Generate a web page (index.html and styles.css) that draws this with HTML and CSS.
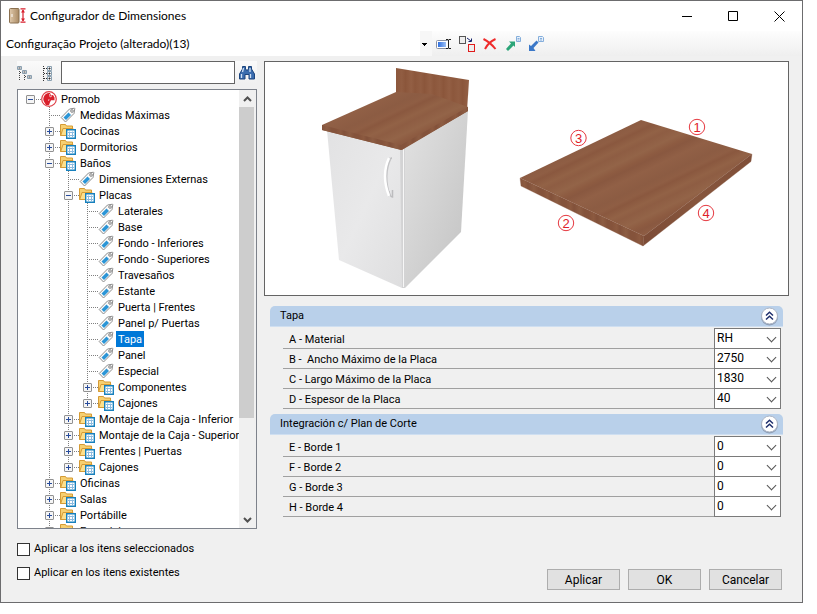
FILE: index.html
```html
<!DOCTYPE html>
<html lang="es">
<head>
<meta charset="utf-8">
<title>Configurador de Dimensiones</title>
<link rel="stylesheet" href="styles.css">
</head>
<body>
<svg class="defs" aria-hidden="true">
  <symbol id="tag" viewBox="0 0 16 16">
    <path d="M1.200 10.500 9.500 2l5-.8.300.300L14 6.500 5.500 15z" fill="#fafafa" stroke="#8d8d8d"/>
    <path d="M3.500 10.500 8.500 5.500 11 8 6 13z" fill="#2b95d6"/>
    <circle cx="12" cy="4" r="1.300" fill="#fff" stroke="#666" stroke-width=".8"/>
  </symbol>
  <symbol id="folder" viewBox="0 0 16 16">
    <path d="M.5 12.500v-11h5l1 1.500h6v9z" fill="#f7d071" stroke="#d59b35"/>
    <path d="M.7 12.500 3 5.500h10v7z" fill="#fde08d" stroke="#d59b35"/>
    <path d="M6.700 6.700h8.600v8.600H6.700z" fill="#fff" stroke="#1780bd" stroke-width="1.400"/>
    <path d="M8 9.500h6M8 12.500h6M9.500 8.500v5.500M12.500 8.500v5.500" stroke="#8dbbe0"/>
  </symbol>
  <symbol id="logo" viewBox="0 0 16 16">
    <circle cx="8" cy="8" r="7.300" fill="#fff" stroke="#df4048" stroke-width="1.200"/>
    <path d="M8 2a6 6 0 0 0-4.500 9.500L5 14l3 .2 1-3 1-2h3.500V6.500L12 4 10 4.500 9 2z" fill="#d91f2b"/>
    <path d="m8.500 3 .5 3 2-1M8 8l-.5 2" stroke="#fff" stroke-width=".6" fill="none"/>
  </symbol>
  <symbol id="chev" viewBox="0 0 19 19">
    <circle cx="9.500" cy="10" r="8.500" fill="#8d9db5"/>
    <circle cx="9.500" cy="9" r="8" fill="#fff" stroke="#aab4c4"/>
    <path d="m6 8.500 3.500-3.300L13 8.500M6 12.500l3.500-3.300 3.500 3.300" fill="none" stroke="#1f2f6d" stroke-width="1.500"/>
  </symbol>
</svg>

<div class="window">
  <header class="titlebar">
    <svg class="app-icon" viewBox="0 0 17 16">
      <defs><linearGradient id="door"><stop offset="0" stop-color="#e0c9ab"/><stop offset="1" stop-color="#a98a64"/></linearGradient></defs>
      <rect x=".5" y=".5" width="9.500" height="14.500" rx="1" fill="url(#door)" stroke="#8a7050"/>
      <path d="M3 6v3" stroke="#fff"/>
      <path d="M11.500.800h5M11.500 14.200h5M14 2v11" stroke="#d81e2c" stroke-width="1.200"/>
      <path d="m12 4.500 2-3 2 3zM12 10.500l2 3 2-3z" fill="#d81e2c"/>
    </svg>
    <h1>Configurador de Dimensiones</h1>
    <div class="window-buttons">
      <button aria-label="Minimizar"><svg viewBox="0 0 11 11"><path d="M0 5.500h10"/></svg></button>
      <button aria-label="Maximizar"><svg viewBox="0 0 11 11"><path d="M.5 .5h9v9h-9z"/></svg></button>
      <button aria-label="Cerrar"><svg viewBox="0 0 11 11"><path d="m.5.500 10 10M10.500.500l-10 10"/></svg></button>
    </div>
  </header>

  <div class="toolbar">
    <select class="project" aria-label="Configuración"><option>Configuração Projeto (alterado)(13)</option></select>
    <button class="tool" aria-label="Renombrar"><svg viewBox="0 0 16 16">
      <defs><linearGradient id="bar"><stop offset="0" stop-color="#2f6fe0"/><stop offset="1" stop-color="#9cc0f5"/></linearGradient></defs>
      <rect x=".5" y="4.500" width="12" height="8" rx="1" fill="#fff" stroke="#8991a3"/><rect x="2" y="6" width="8" height="5" fill="url(#bar)"/>
      <path d="M10 3.500h2l.5 1 .5-1h2M12.500 4v8M10 12.500h2l.5-1 .5 1h2" stroke="#222" fill="none"/></svg></button>
    <button class="tool" aria-label="Duplicar"><svg viewBox="0 0 16 16">
      <rect x=".5" y=".5" width="6" height="7" fill="#eee" stroke="#555"/><rect x="9.500" y="8.500" width="6" height="7" fill="#eee" stroke="#e01b1b"/>
      <path d="m8 2 4 3M12.500 2.500v3h-3" stroke="#17246e" fill="none"/></svg></button>
    <button class="tool" aria-label="Eliminar"><svg viewBox="0 0 16 16">
      <path d="M1.500 3c4 2 8 5 12 10M13.500 3C9 5 5 9 3 13" stroke="#ef2b2b" stroke-width="2" fill="none"/></svg></button>
    <button class="tool" aria-label="Exportar"><svg viewBox="0 0 16 16">
      <path d="M11.500.500h3l1 1v4h-4z" fill="#e8f1fc" stroke="#85aedb"/><path d="M12.500 2.500h2M12.500 4h2" stroke="#85aedb"/>
      <path d="m1 13 2 2 5.500-5.500L10 11V5.500H4L6 7.500z" fill="#2ba578"/></svg></button>
    <button class="tool" aria-label="Importar"><svg viewBox="0 0 16 16">
      <path d="M10.500.500h4l1 1v4h-5z" fill="#e8f1fc" stroke="#85aedb"/><path d="M12 2.500h2M12 4h2" stroke="#85aedb"/>
      <path d="M10.500 6.500 8.500 4.500 3 10 1 8.500V15h6.500L5.500 12z" fill="#3b78c8"/></svg></button>
  </div>

  <main class="content">
    <section class="sidebar">
      <div class="search">
        <button class="find" aria-label="Contraer todo"><svg viewBox="0 0 16 16">
          <path d="M2.500 4v12M3 7.500h2M7.500 10v6M8 11.500h3" stroke="#444" stroke-dasharray="1 1"/>
          <path d="M.5 1.500h4v3h-4zM5.500 5.500h4v3h-4zM10.500 10.500h4v3h-4z" fill="#f2f4f7" stroke="#8aa0b0"/>
          <path d="M1.500 3h2M6.500 7h2M11.500 12h2" stroke="#333"/></svg></button>
        <button class="find" aria-label="Expandir todo"><svg viewBox="0 0 16 16">
          <path d="M4.500 1v15M5 3.500h3M5 8.500h3M5 13.500h3" stroke="#333" stroke-dasharray="1 1"/>
          <path d="M8.500 1.500h4v4h-4zM8.500 6.500h4v4h-4zM8.500 11.500h4v4h-4z" fill="#f2f4f7" stroke="#8aa0b0"/>
          <path d="M9.500 3.500h2M10.500 2.500v2M9.500 8.500h2M10.500 7.500v2M9.500 13.500h2M10.500 12.500v2" stroke="#333"/></svg></button>
        <input type="text" aria-label="Buscar">
        <button class="find" aria-label="Buscar"><svg viewBox="0 0 16 16">
          <path d="M3.500 1.500h3V4l.5 1h2l.5-1V1.500h3V4l3 5v5h-5.500V9.500h-4V14H.5V9l3-5z" fill="#3a6cae" stroke="#1c457e"/>
          <path d="M4.500 3 3.500 7M2.500 9v4M11 3v4M11.500 9v4" stroke="#cfe0f5" stroke-width="1.300"/></svg></button>
      </div>

      <div class="tree">
        <div class="tree-view">
          <ul>
            <li><div class="node"><span class="joint"><button class="toggle open" aria-label="Contraer"></button></span><svg><use href="#logo"/></svg><span class="label">Promob</span></div>
              <ul>
                <li><div class="node"><span class="joint"></span><svg><use href="#tag"/></svg><span class="label">Medidas Máximas</span></div></li>
                <li><div class="node"><span class="joint"><button class="toggle" aria-label="Expandir"></button></span><svg><use href="#folder"/></svg><span class="label">Cocinas</span></div></li>
                <li><div class="node"><span class="joint"><button class="toggle" aria-label="Expandir"></button></span><svg><use href="#folder"/></svg><span class="label">Dormitorios</span></div></li>
                <li><div class="node"><span class="joint"><button class="toggle open" aria-label="Contraer"></button></span><svg><use href="#folder"/></svg><span class="label">Baños</span></div>
                  <ul>
                    <li><div class="node"><span class="joint"></span><svg><use href="#tag"/></svg><span class="label">Dimensiones Externas</span></div></li>
                    <li><div class="node"><span class="joint"><button class="toggle open" aria-label="Contraer"></button></span><svg><use href="#folder"/></svg><span class="label">Placas</span></div>
                      <ul>
                        <li><div class="node"><span class="joint"></span><svg><use href="#tag"/></svg><span class="label">Laterales</span></div></li>
                        <li><div class="node"><span class="joint"></span><svg><use href="#tag"/></svg><span class="label">Base</span></div></li>
                        <li><div class="node"><span class="joint"></span><svg><use href="#tag"/></svg><span class="label">Fondo - Inferiores</span></div></li>
                        <li><div class="node"><span class="joint"></span><svg><use href="#tag"/></svg><span class="label">Fondo - Superiores</span></div></li>
                        <li><div class="node"><span class="joint"></span><svg><use href="#tag"/></svg><span class="label">Travesaños</span></div></li>
                        <li><div class="node"><span class="joint"></span><svg><use href="#tag"/></svg><span class="label">Estante</span></div></li>
                        <li><div class="node"><span class="joint"></span><svg><use href="#tag"/></svg><span class="label">Puerta | Frentes</span></div></li>
                        <li><div class="node"><span class="joint"></span><svg><use href="#tag"/></svg><span class="label">Panel p/ Puertas</span></div></li>
                        <li><div class="node"><span class="joint"></span><svg><use href="#tag"/></svg><span class="label selected">Tapa</span></div></li>
                        <li><div class="node"><span class="joint"></span><svg><use href="#tag"/></svg><span class="label">Panel</span></div></li>
                        <li><div class="node"><span class="joint"></span><svg><use href="#tag"/></svg><span class="label">Especial</span></div></li>
                        <li><div class="node"><span class="joint"><button class="toggle" aria-label="Expandir"></button></span><svg><use href="#folder"/></svg><span class="label">Componentes</span></div></li>
                        <li><div class="node"><span class="joint"><button class="toggle" aria-label="Expandir"></button></span><svg><use href="#folder"/></svg><span class="label">Cajones</span></div></li>
                      </ul>
                    </li>
                    <li><div class="node"><span class="joint"><button class="toggle" aria-label="Expandir"></button></span><svg><use href="#folder"/></svg><span class="label">Montaje de la Caja - Inferior</span></div></li>
                    <li><div class="node"><span class="joint"><button class="toggle" aria-label="Expandir"></button></span><svg><use href="#folder"/></svg><span class="label">Montaje de la Caja - Superior</span></div></li>
                    <li><div class="node"><span class="joint"><button class="toggle" aria-label="Expandir"></button></span><svg><use href="#folder"/></svg><span class="label">Frentes | Puertas</span></div></li>
                    <li><div class="node"><span class="joint"><button class="toggle" aria-label="Expandir"></button></span><svg><use href="#folder"/></svg><span class="label">Cajones</span></div></li>
                  </ul>
                </li>
                <li><div class="node"><span class="joint"><button class="toggle" aria-label="Expandir"></button></span><svg><use href="#folder"/></svg><span class="label">Oficinas</span></div></li>
                <li><div class="node"><span class="joint"><button class="toggle" aria-label="Expandir"></button></span><svg><use href="#folder"/></svg><span class="label">Salas</span></div></li>
                <li><div class="node"><span class="joint"><button class="toggle" aria-label="Expandir"></button></span><svg><use href="#folder"/></svg><span class="label">Portábille</span></div></li>
                <li><div class="node"><span class="joint"><button class="toggle" aria-label="Expandir"></button></span><svg><use href="#folder"/></svg><span class="label">Exposiciones</span></div></li>
              </ul>
            </li>
          </ul>
        </div>
        <div class="scrollbar">
          <button aria-label="Subir"><svg viewBox="0 0 9 6"><path d="m1 5 3.500-3.500L8 5"/></svg></button>
          <div class="track"><div class="thumb"></div></div>
          <button aria-label="Bajar"><svg viewBox="0 0 9 6"><path d="m1 1 3.500 3.500L8 1"/></svg></button>
        </div>
      </div>
    </section>

    <section class="details">
      <div class="preview">
        <svg viewBox="265 62 523 233" role="img" aria-label="Mueble y tapa con bordes numerados">
          <defs>
            <linearGradient id="grain" gradientUnits="userSpaceOnUse" x1="580" y1="149" x2="606" y2="203" spreadMethod="repeat">
              <stop offset="0" stop-color="#8c5c43"/><stop offset=".1" stop-color="#8f5e44"/><stop offset=".16" stop-color="#8a583f"/>
              <stop offset=".28" stop-color="#926246"/><stop offset=".36" stop-color="#8e5d43"/><stop offset=".5" stop-color="#936448"/>
              <stop offset=".6" stop-color="#8d5b41"/><stop offset=".66" stop-color="#895840"/><stop offset=".8" stop-color="#916046"/><stop offset="1" stop-color="#8c5c43"/>
            </linearGradient>
            <linearGradient id="edge" gradientUnits="userSpaceOnUse" x1="520" y1="0" x2="543" y2="0" spreadMethod="repeat">
              <stop offset="0" stop-color="#85533b"/><stop offset=".2" stop-color="#8c5a40"/><stop offset=".35" stop-color="#82513a"/>
              <stop offset=".6" stop-color="#8d5d43"/><stop offset=".8" stop-color="#84533b"/><stop offset="1" stop-color="#85533b"/>
            </linearGradient>
            <linearGradient id="right-edge" x1="0" y1="1" x2="1" y2="0">
              <stop offset="0" stop-color="#7c4b36"/><stop offset=".5" stop-color="#87563d"/><stop offset="1" stop-color="#7f4e38"/>
            </linearGradient>
            <linearGradient id="back" gradientUnits="userSpaceOnUse" x1="396" y1="0" x2="415" y2="0" spreadMethod="repeat">
              <stop offset="0" stop-color="#8c573c"/><stop offset=".3" stop-color="#915d42"/><stop offset=".5" stop-color="#8b563b"/>
              <stop offset=".8" stop-color="#935f44"/><stop offset="1" stop-color="#8c573c"/>
            </linearGradient>
            <linearGradient id="front" x1="0" y1="0" x2="1" y2="1"><stop offset="0" stop-color="#e2e2e3"/><stop offset=".5" stop-color="#e9e9ea"/><stop offset="1" stop-color="#dededf"/></linearGradient>
            <linearGradient id="side" x1="0" y1="0" x2="1" y2="1"><stop offset="0" stop-color="#e2e2e2"/><stop offset="1" stop-color="#c2c2c2"/></linearGradient>
          </defs>
          <path d="M327 130 402 147V288L339 260z" fill="url(#front)"/>
          <path d="M405 148 468 110 461 232 405 288z" fill="url(#side)"/>
          <path d="M400 148h5v140h-3z" fill="#d3d3d4"/>
          <path d="M403.500 148v139" stroke="#f7f7f7"/>
          <path d="M392 158q-2 0-3 3M389 191q1 6 3.500 6v-7" fill="none" stroke="#bcbcbe" stroke-width="1.500"/>
          <path d="M390.500 158q-8 17-1 38" fill="none" stroke="#c4c4c6" stroke-width="2.500"/>
          <path d="M389 158q-8 17 0 38" fill="none" stroke="#fff" stroke-width="2.500"/>
          <path d="m396 68 73 12-2 31-71-17z" fill="url(#back)"/>
          <path d="m322 125 74-33 36 2 36 13v4l-66 39-80-20z" fill="url(#grain)"/>
          <path d="m322 125 79 20 67-38v4l-67 39-79-20z" fill="url(#edge)"/>
          <path d="m520 178 121-58 111 34-108 82z" fill="url(#grain)"/>
          <path d="m520 178 124 58-1 10-122-60z" fill="url(#edge)" stroke="#8a5940" stroke-width=".3"/>
          <path d="m752 154-1 7.500L643 246l1-10z" fill="url(#right-edge)" stroke="#825039" stroke-width=".3"/>
          <g class="marks">
            <circle cx="697" cy="127" r="7.700"/><text x="697" y="132">1</text>
            <circle cx="566" cy="223" r="7.700"/><text x="566" y="228">2</text>
            <circle cx="578.500" cy="138" r="7.700"/><text x="578.500" y="143">3</text>
            <circle cx="706" cy="213" r="7.700"/><text x="706" y="218">4</text>
          </g>
        </svg>
      </div>

      <div class="groups">
        <section class="group">
          <div class="group-head"><h2>Tapa</h2><button aria-label="Contraer grupo"><svg><use href="#chev"/></svg></button></div>
          <div class="fields">
            <div class="field"><label for="a">A - Material</label><select id="a"><option>RH</option></select></div>
            <div class="field"><label for="b">B -&nbsp; Ancho Máximo de la Placa</label><select id="b"><option>2750</option></select></div>
            <div class="field"><label for="c">C - Largo Máximo de la Placa</label><select id="c"><option>1830</option></select></div>
            <div class="field"><label for="d">D - Espesor de la Placa</label><select id="d"><option>40</option></select></div>
          </div>
        </section>
        <section class="group">
          <div class="group-head"><h2>Integración c/ Plan de Corte</h2><button aria-label="Contraer grupo"><svg><use href="#chev"/></svg></button></div>
          <div class="fields">
            <div class="field"><label for="e">E - Borde 1</label><select id="e"><option>0</option></select></div>
            <div class="field"><label for="f">F - Borde 2</label><select id="f"><option>0</option></select></div>
            <div class="field"><label for="g">G - Borde 3</label><select id="g"><option>0</option></select></div>
            <div class="field"><label for="h">H - Borde 4</label><select id="h"><option>0</option></select></div>
          </div>
        </section>
      </div>
    </section>
  </main>

  <footer class="footer">
    <div class="checks">
      <label><input type="checkbox">Aplicar a los itens seleccionados</label>
      <label><input type="checkbox">Aplicar en los itens existentes</label>
    </div>
    <div class="actions">
      <button>Aplicar</button>
      <button>OK</button>
      <button>Cancelar</button>
    </div>
  </footer>
</div>
</body>
</html>
```
FILE: styles.css
```css
* { box-sizing: border-box; }

body {
  margin: 0;
  padding: 0 14px 11px 0;
  background: #fff;
  color: #000;
  font: 11px/16px Roboto, "Liberation Sans", sans-serif;
}

button, input, select {
  margin: 0;
  padding: 0;
  border: 0;
  border-radius: 0;
  background: none;
  color: inherit;
  font: inherit;
}

ul { margin: 0; padding: 0; list-style: none; }
h1, h2 { margin: 0; font-weight: normal; }
svg { display: block; }
.defs { position: absolute; width: 0; height: 0; }

.window {
  display: flex;
  flex-direction: column;
  height: calc(100vh - 11px);
  min-height: 560px;
  border: 1px solid #6c6c6e;
  background: #f0f0f0;
}

/* Title bar */
.titlebar {
  display: flex;
  align-items: center;
  height: 30px;
  padding-left: 8px;
  background: #fff;
}
.app-icon { width: 17px; height: 16px; margin-right: 4px; }
.titlebar h1 { flex: 1; font: 12px/16px Lato, sans-serif; }
.window-buttons { display: flex; }
.window-buttons button { display: grid; place-items: center; width: 46px; height: 30px; }
.window-buttons svg { width: 11px; height: 11px; fill: none; stroke: #000; }

/* Project toolbar */
.toolbar {
  display: flex;
  align-items: center;
  height: 25px;
  background: linear-gradient(#fdfdfd, #efefef);
}
.project {
  appearance: none;
  width: 431px;
  height: 25px;
  margin-right: 4px;
  padding: 1px 0 0 5px;
  background: linear-gradient(#000, #000) 421px 12px / 5px 1px no-repeat,
    linear-gradient(#000, #000) 422px 13px / 3px 1px no-repeat,
    linear-gradient(#000, #000) 423px 14px / 1px 1px no-repeat,
    linear-gradient(90deg, #fff 419px, #f7f7f7 419px);
  font: 12px/16px Lato, sans-serif;
}
.tool { width: 16px; height: 16px; margin-right: 7px; }
.tool svg, .find svg { width: 16px; height: 16px; }

/* Content columns */
.content {
  display: grid;
  grid-template-columns: 240px 1fr;
  gap: 7px;
  flex: 1;
  min-height: 0;
  padding: 5px 13px 0 16px;
}
.sidebar { display: flex; flex-direction: column; min-height: 0; }
.search { display: flex; align-items: center; height: 23px; margin-bottom: 5px; background: linear-gradient(#fafafa, #f0f0f0); }
.find { margin-right: 6px; }
.find:last-child { margin: 0 2px 0 4px; }
.search input { flex: 1; min-width: 0; height: 23px; padding: 0 4px; border: 1px solid #646464; background: #fff; }

/* Tree */
.tree { display: flex; flex: 1; min-height: 0; border: 1px solid #7d828b; background: #fff; }
.tree-view { flex: 1; min-width: 0; padding: 1px 0 0 8px; overflow: hidden; white-space: nowrap; }
.tree ul ul { padding-left: 19px; }
.tree li { position: relative; }
.tree li li::before {
  content: "";
  position: absolute;
  left: 4px;
  top: 0;
  bottom: 0;
  width: 1px;
  background: repeating-linear-gradient(#808080 0 1px, transparent 1px 2px);
}
.tree li ul ul li:last-child::before { bottom: 8px; }
.node { display: flex; align-items: center; height: 16px; }
.node svg { flex: none; width: 16px; height: 16px; margin-right: 2px; }
.joint {
  position: relative;
  display: flex;
  flex: none;
  align-items: center;
  width: 15px;
  height: 16px;
  background: repeating-linear-gradient(90deg, #808080 0 1px, transparent 1px 2px) 4px 8px / 11px 1px no-repeat;
}
.toggle {
  width: 9px;
  height: 9px;
  border: 1px solid #919191;
  border-radius: 1px;
  background: linear-gradient(#274b9b, #274b9b) center / 5px 1px no-repeat,
    linear-gradient(#274b9b, #274b9b) center / 1px 5px no-repeat, #f5f5f5;
}
.toggle.open { background: linear-gradient(#274b9b, #274b9b) center / 5px 1px no-repeat, #f5f5f5; }
.label { padding: 2px 2px 0; line-height: 14px; }
.selected { background: #0078d7; color: #fff; }

.scrollbar { display: flex; flex: none; flex-direction: column; width: 17px; background: #f0f0f0; }
.scrollbar button { display: grid; place-items: center; height: 17px; }
.scrollbar svg { width: 9px; height: 6px; fill: none; stroke: #505050; stroke-width: 2; }
.track { flex: 1; }
.thumb { width: 15px; height: 77%; background: #cdcdcd; }

/* Preview */
.preview { border: 1px solid #646464; background: #fff; }
.preview svg { width: 100%; height: auto; }
.marks circle { fill: #fff; stroke: #e5383f; }
.marks text { fill: #e02028; font: 13px "Liberation Sans", sans-serif; text-anchor: middle; }

/* Property groups */
.groups { display: flex; flex-direction: column; gap: 5px; padding: 10px 6px 0; }
.group-head {
  display: flex;
  align-items: center;
  justify-content: space-between;
  height: 21px;
  margin-bottom: 2px;
  padding: 0 4px 0 10px;
  border-bottom: 1px solid #cfdff1;
  border-radius: 5px 5px 0 0;
  background: #b9d0ea;
}
.group-head h2 { font-size: 11px; }
.group-head svg { width: 19px; height: 19px; }
.fields { margin: 0 2px 0 13px; }
.field { position: relative; display: flex; align-items: flex-end; height: 20px; border-bottom: 1px solid #a0a0a0; }
.field label { flex: 1; padding-left: 6px; line-height: 17px; }
.field select {
  appearance: none;
  width: 67px;
  height: 21px;
  margin-bottom: -1px;
  padding: 0 0 2px 2px;
  border: 1px solid #7a7a7a;
  background: #fff;
  font-size: 12px;
}
.field::after {
  content: "";
  position: absolute;
  right: 6px;
  top: 5px;
  width: 6px;
  height: 6px;
  border: solid #555;
  border-width: 0 1px 1px 0;
  transform: rotate(45deg);
  pointer-events: none;
}

/* Footer */
.footer { display: flex; justify-content: space-between; align-items: flex-end; padding: 12px 20px 12px 16px; }
.checks { display: flex; flex-direction: column; gap: 8px; padding-bottom: 9px; }
.checks label { display: flex; align-items: center; }
.checks input { appearance: none; width: 13px; height: 13px; margin-right: 4px; border: 1px solid #333; background: #fff; }
.actions { display: flex; gap: 8px; }
.actions button { width: 73px; height: 21px; border: 1px solid #adadad; background: #e1e1e1; font-size: 12px; }
```
